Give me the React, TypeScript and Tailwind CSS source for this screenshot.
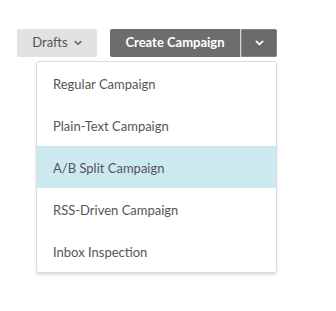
import React from 'react';

const items = [
    'Regular Campaign',
    'Plain-Text Campaign',
    'A/B Split Campaign',
    'RSS-Driven Campaign',
    'Inbox Inspection',
];

const Caret: React.FC<{ className?: string }> = ({ className }) => (
    <svg viewBox="0 0 10 6" className={className} fill="none" stroke="currentColor" strokeWidth="2" strokeLinecap="round" strokeLinejoin="round">
        <path d="M1.5 1.2 5 4.6 8.5 1.2" />
    </svg>
);

export default function App() {
    const active = 2;
    return (
        <div className="w-[336px] h-[311px] bg-white pl-[17px] pt-[29px] font-['Lato',sans-serif]">
            <div className="relative flex items-start gap-[13px]">
                {/* Drafts */}
                <button className="flex items-center justify-center gap-[6px] w-[80px] h-[28px] rounded-[2px] bg-[#e2e2e2] text-[13px] text-[#555]">
                    Drafts
                    <Caret className="w-[8px] h-[6px] text-[#666]" />
                </button>

                {/* Split button */}
                <div className="relative flex h-[28px]">
                    <button className="w-[130px] h-full rounded-l-[2px] bg-[#6d6d6d] text-[13px] font-bold text-white">
                        Create Campaign
                    </button>
                    <div className="w-px h-full bg-[#d8d8d8]" />
                    <button className="flex items-center justify-center w-[36px] h-full rounded-r-[2px] bg-[#6a6a6a] outline-1 outline-dotted outline-offset-[-1px] outline-[#9a9a9a]">
                        <Caret className="w-[9px] h-[6px] text-white" />
                    </button>

                    {/* Menu */}
                    <div className="absolute right-0 top-[32px] w-[241px] bg-white border border-[#dcdcdc] rounded-[3px] shadow-[0_2px_3px_rgba(0,0,0,0.12)] overflow-hidden">
                        {items.map((label, i) => (
                            <div
                                key={label}
                                className={`flex items-center h-[42px] pt-[4px] pl-[16px] text-[13px] text-[#555] ${i === active ? 'bg-[#cde9f0]' : ''}`}
                            >
                                {label}
                            </div>
                        ))}
                    </div>
                </div>
            </div>
        </div>
    );
}
